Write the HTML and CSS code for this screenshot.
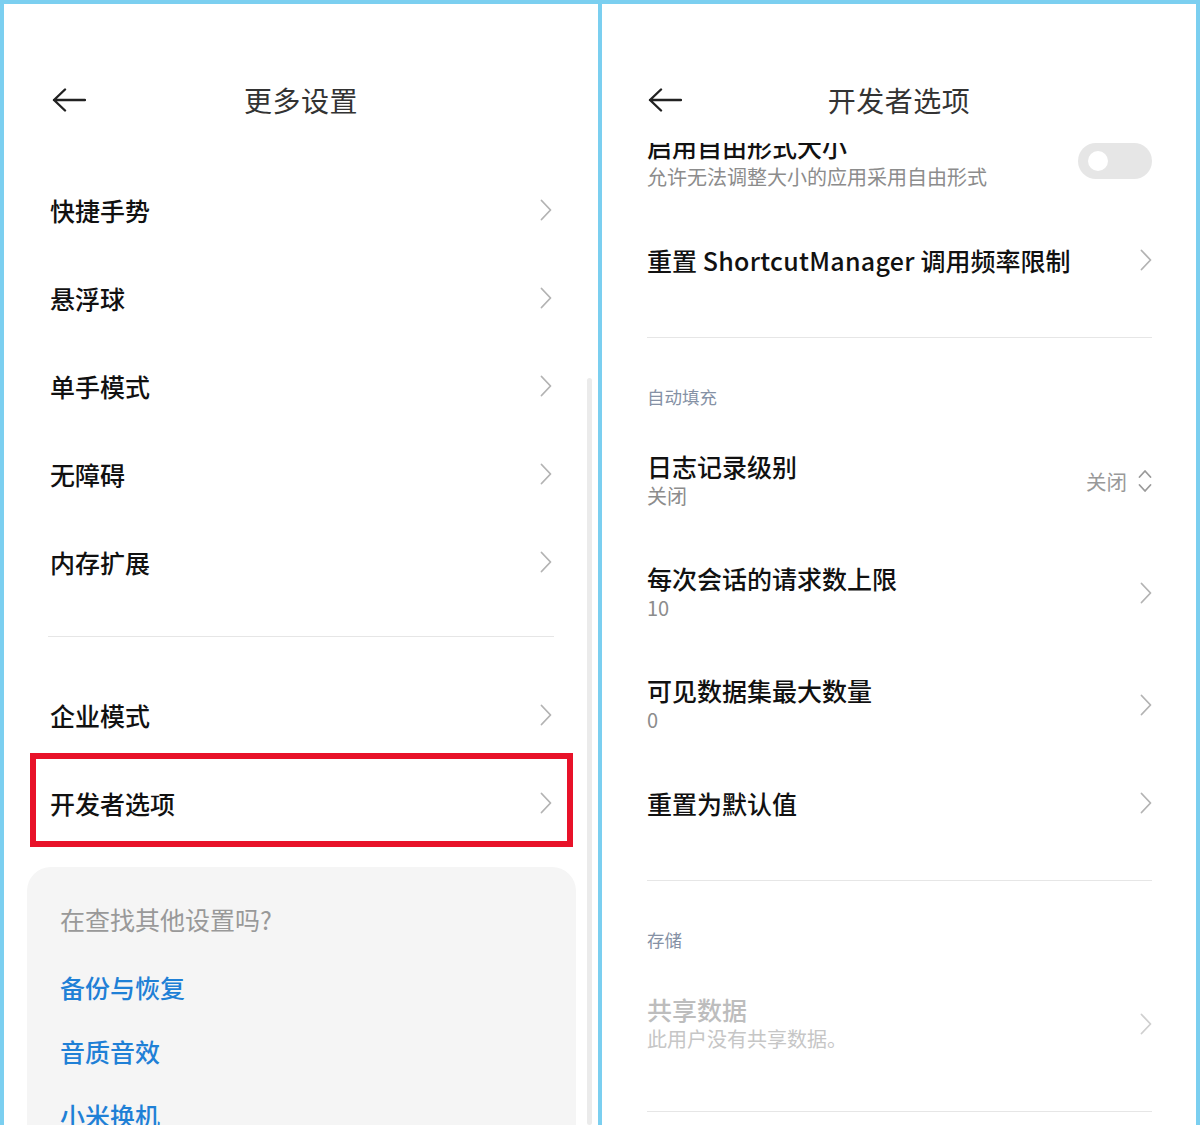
FILE: index.html
```html
<!DOCTYPE html>
<html lang="zh-CN">
<head>
<meta charset="utf-8">
<title>更多设置 / 开发者选项</title>
<link rel="stylesheet" href="styles.css">
</head>
<body>
<div class="frame">
  <section class="panel left">
    <header class="bar">
      <svg class="back" width="34" height="24" viewBox="0 0 34 24"><path d="M2 12H33M13 1.5L2 12L13 22.5" fill="none" stroke="#222" stroke-width="2.4" stroke-linecap="round" stroke-linejoin="round"/></svg>
      <h1 class="title">更多设置</h1>
      <span></span>
    </header>
    <div class="llist">
      <div class="lrow"><span>快捷手势</span><svg class="chev" width="12" height="22" viewBox="0 0 12 22"><polyline points="1.5,1.5 10.5,11 1.5,20.5" fill="none" stroke="#b3b3b3" stroke-width="1.8" stroke-linecap="round" stroke-linejoin="round"/></svg></div>
      <div class="lrow"><span>悬浮球</span><svg class="chev" width="12" height="22" viewBox="0 0 12 22"><polyline points="1.5,1.5 10.5,11 1.5,20.5" fill="none" stroke="#b3b3b3" stroke-width="1.8" stroke-linecap="round" stroke-linejoin="round"/></svg></div>
      <div class="lrow"><span>单手模式</span><svg class="chev" width="12" height="22" viewBox="0 0 12 22"><polyline points="1.5,1.5 10.5,11 1.5,20.5" fill="none" stroke="#b3b3b3" stroke-width="1.8" stroke-linecap="round" stroke-linejoin="round"/></svg></div>
      <div class="lrow"><span>无障碍</span><svg class="chev" width="12" height="22" viewBox="0 0 12 22"><polyline points="1.5,1.5 10.5,11 1.5,20.5" fill="none" stroke="#b3b3b3" stroke-width="1.8" stroke-linecap="round" stroke-linejoin="round"/></svg></div>
      <div class="lrow"><span>内存扩展</span><svg class="chev" width="12" height="22" viewBox="0 0 12 22"><polyline points="1.5,1.5 10.5,11 1.5,20.5" fill="none" stroke="#b3b3b3" stroke-width="1.8" stroke-linecap="round" stroke-linejoin="round"/></svg></div>
      <div class="ldivider"></div>
      <div class="lgroup">
        <div class="lrow"><span>企业模式</span><svg class="chev" width="12" height="22" viewBox="0 0 12 22"><polyline points="1.5,1.5 10.5,11 1.5,20.5" fill="none" stroke="#b3b3b3" stroke-width="1.8" stroke-linecap="round" stroke-linejoin="round"/></svg></div>
        <div class="lrow marked"><span>开发者选项</span><svg class="chev" width="12" height="22" viewBox="0 0 12 22"><polyline points="1.5,1.5 10.5,11 1.5,20.5" fill="none" stroke="#b3b3b3" stroke-width="1.8" stroke-linecap="round" stroke-linejoin="round"/></svg></div>
      </div>
      <div class="card">
        <div class="hint">在查找其他设置吗?</div>
        <div class="link first">备份与恢复</div>
        <div class="link">音质音效</div>
        <div class="link">小米换机</div>
      </div>
    </div>
    <div class="scrollbar"></div>
  </section>

  <section class="panel right">
    <header class="bar rbar">
      <svg class="back" width="34" height="24" viewBox="0 0 34 24"><path d="M2 12H33M13 1.5L2 12L13 22.5" fill="none" stroke="#222" stroke-width="2.4" stroke-linecap="round" stroke-linejoin="round"/></svg>
      <h1 class="title">开发者选项</h1>
      <span></span>
    </header>
    <div class="rlist">
      <div class="rrow freeform">
        <div class="txt">
          <div class="rt">启用自由形式大小</div>
          <div class="rs tight">允许无法调整大小的应用采用自由形式</div>
        </div>
        <div class="toggle"><span class="knob"></span></div>
      </div>
      <div class="rrow single">
        <div class="rt">重置 <span class="latin">ShortcutManager</span> 调用频率限制</div>
        <svg class="chev" width="12" height="22" viewBox="0 0 12 22"><polyline points="1.5,1.5 10.5,11 1.5,20.5" fill="none" stroke="#b3b3b3" stroke-width="1.8" stroke-linecap="round" stroke-linejoin="round"/></svg>
      </div>
      <div class="rdivider d35"></div>
      <div class="section">自动填充</div>
      <div class="rrow double">
        <div class="txt">
          <div class="rt">日志记录级别</div>
          <div class="rs">关闭</div>
        </div>
        <div class="value"><span>关闭</span><svg width="14" height="26" viewBox="0 0 14 26"><polyline points="1.5,9 7,3 12.5,9" fill="none" stroke="#9a9a9a" stroke-width="1.8" stroke-linecap="round" stroke-linejoin="round"/><polyline points="1.5,17 7,23 12.5,17" fill="none" stroke="#9a9a9a" stroke-width="1.8" stroke-linecap="round" stroke-linejoin="round"/></svg></div>
      </div>
      <div class="rrow double">
        <div class="txt">
          <div class="rt">每次会话的请求数上限</div>
          <div class="rs">10</div>
        </div>
        <svg class="chev" width="12" height="22" viewBox="0 0 12 22"><polyline points="1.5,1.5 10.5,11 1.5,20.5" fill="none" stroke="#b3b3b3" stroke-width="1.8" stroke-linecap="round" stroke-linejoin="round"/></svg>
      </div>
      <div class="rrow double">
        <div class="txt">
          <div class="rt">可见数据集最大数量</div>
          <div class="rs">0</div>
        </div>
        <svg class="chev" width="12" height="22" viewBox="0 0 12 22"><polyline points="1.5,1.5 10.5,11 1.5,20.5" fill="none" stroke="#b3b3b3" stroke-width="1.8" stroke-linecap="round" stroke-linejoin="round"/></svg>
      </div>
      <div class="rrow single">
        <div class="rt">重置为默认值</div>
        <svg class="chev" width="12" height="22" viewBox="0 0 12 22"><polyline points="1.5,1.5 10.5,11 1.5,20.5" fill="none" stroke="#b3b3b3" stroke-width="1.8" stroke-linecap="round" stroke-linejoin="round"/></svg>
      </div>
      <div class="rdivider d35"></div>
      <div class="section">存储</div>
      <div class="rrow double disabled">
        <div class="txt">
          <div class="rt">共享数据</div>
          <div class="rs">此用户没有共享数据。</div>
        </div>
        <svg class="chev" width="12" height="22" viewBox="0 0 12 22"><polyline points="1.5,1.5 10.5,11 1.5,20.5" fill="none" stroke="#cfcfcf" stroke-width="1.8" stroke-linecap="round" stroke-linejoin="round"/></svg>
      </div>
      <div class="rdivider d31"></div>
    </div>
  </section>
</div>
</body>
</html>
```

FILE: styles.css
```css
* { box-sizing: border-box; }
html, body {
  margin: 0;
  padding: 0;
  width: 1200px;
  height: 1125px;
  overflow: hidden;
}
body {
  background: #7bcff0;
  font-family: "Noto Sans CJK SC", "Noto Sans", sans-serif;
  color: #111;
}
.frame {
  display: flex;
  gap: 4px;
  padding: 4px 4px 0 4px;
  height: 1125px;
}
.panel {
  position: relative;
  width: 594px;
  height: 1121px;
  background: #fff;
  overflow: hidden;
  display: flex;
  flex-direction: column;
}
.bar {
  display: grid;
  grid-template-columns: 1fr auto 1fr;
  align-items: center;
  height: 52px;
  box-sizing: content-box;
  padding: 70px 0 40px 0;
  background: #fff;
  flex: none;
}
.rbar {
  padding-bottom: 17px;
  position: relative;
  z-index: 2;
}
.back {
  justify-self: start;
  margin-left: 48px;
  display: block;
}
.right .back { margin-left: 46px; }
.title {
  margin: 0;
  font-size: 28px;
  font-weight: 400;
  line-height: 52px;
  color: #333;
  letter-spacing: 0.5px;
}

/* left list */
.llist {
  flex: 1;
}
.lrow {
  display: flex;
  align-items: center;
  justify-content: space-between;
  height: 88px;
  padding: 0 46px 0 46px;
  font-size: 25px;
  font-weight: 500;
  line-height: 30px;
  color: #111;
}
.chev { display: block; flex: none; }
.ldivider {
  height: 1px;
  margin: 30px 44px 0 44px;
  background: #e6e6e6;
}
.lgroup {
  margin-top: 34px;
}
.marked {
  position: relative;
}
.marked::after {
  content: "";
  position: absolute;
  left: 26px;
  right: 25px;
  top: -6px;
  bottom: 0;
  border: 6px solid #e81229;
}
.card {
  margin: 20px 22px 0 23px;
  background: #f5f5f5;
  border-radius: 24px;
  padding: 34px 33px 40px 33px;
}
.hint {
  font-size: 25px;
  line-height: 36px;
  color: #999;
}
.link {
  font-size: 25px;
  line-height: 36px;
  color: #1f80d6;
  font-weight: 500;
  margin-top: 28px;
}
.link.first { margin-top: 32px; }
.scrollbar {
  position: absolute;
  left: 583px;
  top: 374px;
  bottom: 0;
  width: 5px;
  border-radius: 3px;
  background: #ebebeb;
}

/* right list */
.rlist {
  flex: 1;
  overflow: hidden;
  position: relative;
}
.rrow {
  display: flex;
  align-items: center;
  justify-content: space-between;
  padding: 0 44px 0 45px;
}
.rt {
  font-size: 25px;
  font-weight: 500;
  line-height: 30px;
  color: #111;
}
.latin { letter-spacing: 0.3px; }
.rs {
  font-size: 20px;
  line-height: 30px;
  color: #8c8c8c;
}
.rs.tight { line-height: 32px; }
.freeform {
  margin-top: -12px;
  padding-bottom: 25px;
  align-items: flex-start;
}
.toggle {
  width: 74px;
  height: 36px;
  margin-top: 12px;
  border-radius: 18px;
  background: #e6e6e6;
  display: flex;
  align-items: center;
  flex: none;
}
.knob {
  width: 20px;
  height: 20px;
  margin-left: 10px;
  border-radius: 50%;
  background: #fff;
}
.single {
  padding-top: 27px;
  padding-bottom: 27px;
}
.double {
  padding-top: 26px;
  padding-bottom: 26px;
}
.rdivider {
  height: 1px;
  margin: 0 44px 0 45px;
  background: #e6e6e6;
}
.d35 { margin-top: 35px; }
.d31 { margin-top: 31px; }
.section {
  margin-top: 47px;
  padding: 0 45px 16px 45px;
  font-size: 17.5px;
  line-height: 24px;
  color: #8591a5;
}
.value {
  display: flex;
  align-items: center;
  gap: 11px;
  font-size: 20.5px;
  color: #999;
}
.value svg { display: block; }
.disabled .rt { color: #bdbdbd; }
.disabled .rs { color: #c6c6c6; }
```
